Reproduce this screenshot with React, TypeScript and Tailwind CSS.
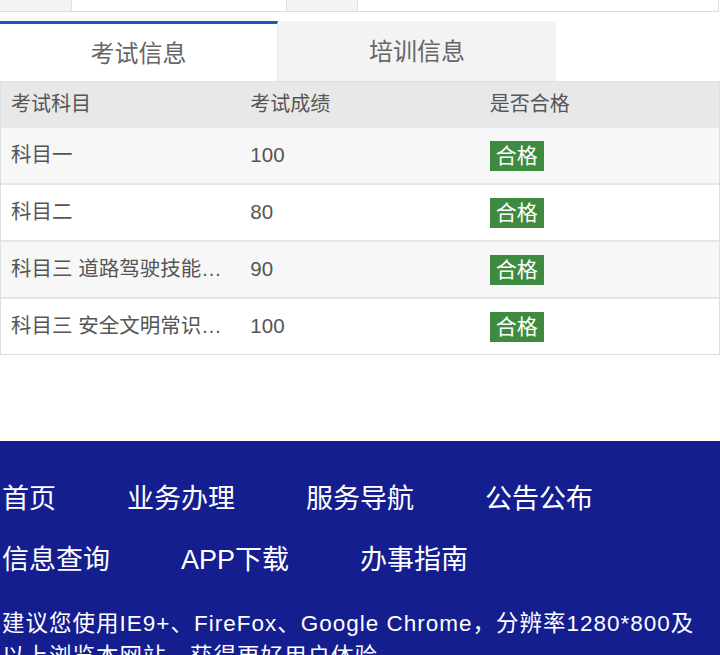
import type { ReactNode } from "react";

const rows = [
  { subject: "科目一", score: "100", pass: true },
  { subject: "科目二", score: "80", pass: true },
  { subject: "科目三 道路驾驶技能考试", score: "90", pass: true },
  { subject: "科目三 安全文明常识考试", score: "100", pass: true },
];

const navRows = [
  ["首页", "业务办理", "服务导航", "公告公布"],
  ["信息查询", "APP下载", "办事指南"],
];

function Cell({ children, className = "" }: { children: ReactNode; className?: string }) {
  return <div className={`flex min-w-0 items-center px-[10px] ${className}`}>{children}</div>;
}

export default function App() {
  return (
    <div className="h-[655px] w-[720px] overflow-hidden bg-white text-[#555]" style={{ fontFamily: '"Liberation Sans", "Noto Sans CJK SC", sans-serif' }}>
      {/* form row cut at top */}
      <div className="flex h-[12px] w-[719px] border-b border-[#dcdcdc]">
        <div className="w-[72px] border-r border-[#e2e2e2] bg-[#f3f3f3]" />
        <div className="w-[215px] border-r border-[#e2e2e2] bg-white" />
        <div className="w-[71px] border-r border-[#e2e2e2] bg-[#f3f3f3]" />
        <div className="flex-1 border-r border-[#dcdcdc] bg-white" />
      </div>

      <div className="mt-[9px] flex h-[60px]">
        <div className="flex w-[278px] items-center justify-center border-t-[3px] border-r border-t-[#1f55b8] border-r-[#e4e4e4] bg-white pt-[2px] text-[24px] text-[#666]">考试信息</div>
        <div className="flex w-[278px] items-center justify-center bg-[#f3f3f3] pt-[2px] text-[24px] text-[#666]">培训信息</div>
      </div>

      <div className="w-[720px] border border-[#dedede]">
        <div className="grid h-[44px] grid-cols-3 bg-[#e8e8e8] text-[20px] text-[#555]">
          <Cell>考试科目</Cell>
          <Cell>考试成绩</Cell>
          <Cell>是否合格</Cell>
        </div>
        {rows.map((r, i) => (
          <div key={i} className={`grid h-[57px] grid-cols-3 border-t-2 border-[#e6e6e6] text-[20.5px] ${i % 2 === 0 ? "bg-[#f7f7f7]" : "bg-white"}`}>
            <Cell><span className="truncate">{r.subject}</span></Cell>
            <Cell>{r.score}</Cell>
            <Cell>
              <span className="flex h-[30px] items-center bg-[#3d8a40] px-[6px] text-[21px] text-white">{r.pass ? "合格" : "不合格"}</span>
            </Cell>
          </div>
        ))}
      </div>

      <footer className="mt-[86px] h-[300px] bg-[#141e8f] pt-[28px] text-white">
        {navRows.map((items, i) => (
          <div key={i} className="flex h-[61px] items-center gap-[71px] pl-[2px] text-[27px]">
            {items.map((t) => (
              <span key={t}>{t}</span>
            ))}
          </div>
        ))}
        <p className="mt-[16px] pl-[2px] text-[22.5px] leading-[33px] tracking-[1px]">
          建议您使用IE9+、FireFox、Google Chrome，分辨率1280*800及
          <br />
          以上浏览本网站，获得更好用户体验
        </p>
      </footer>
    </div>
  );
}
